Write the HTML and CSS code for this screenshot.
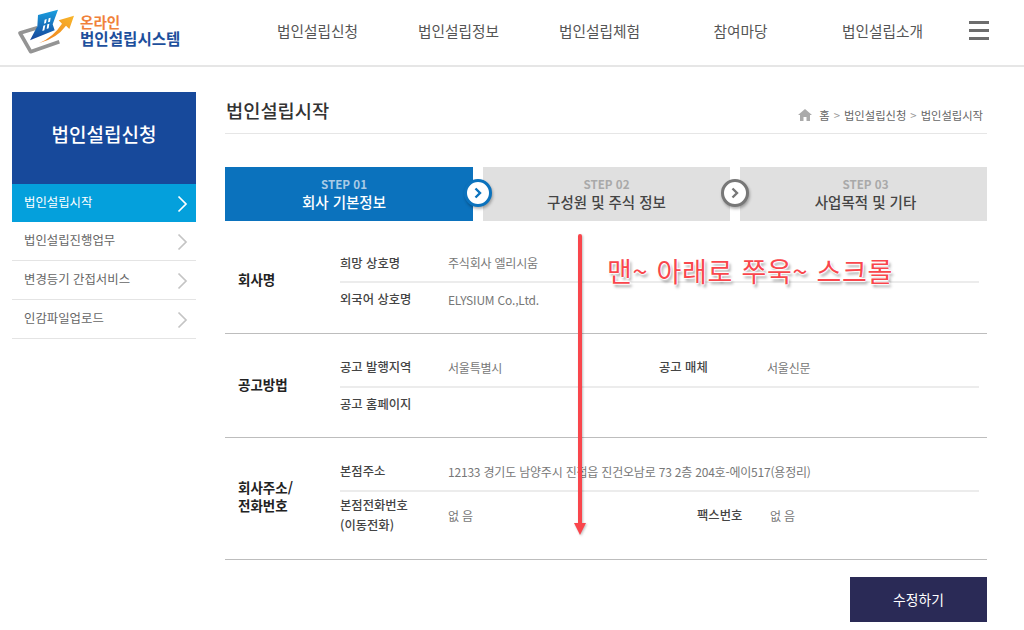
FILE: index.html
```html
<!DOCTYPE html>
<html lang="ko">
<head>
    <meta charset="UTF-8">
    <title>온라인 법인설립시스템</title>
    <link rel="stylesheet" href="styles.css">
</head>
<body>
    <header class="header">
        <div class="logo">
            <svg class="logo-mark" width="70" height="56" viewBox="0 0 210 168">
                <defs>
                    <linearGradient id="logo-blue" x1="0" y1="0" x2="0" y2="1">
                        <stop offset="0" stop-color="#19a0e0"/>
                        <stop offset="1" stop-color="#17459a"/>
                    </linearGradient>
                    <linearGradient id="logo-orange" x1="1" y1="0" x2="0" y2="1">
                        <stop offset="0" stop-color="#f8b62a"/>
                        <stop offset="1" stop-color="#ee7d1f"/>
                    </linearGradient>
                </defs>
                <path d="M82 68 L30 84 L62 140 L148 110" fill="none" stroke="#949494" stroke-width="11" stroke-linejoin="round"/>
                <path d="M88 114 Q130 96 156 56 L146 46 L192 32 L178 72 L168 62 Q140 100 88 114 Z" fill="url(#logo-orange)"/>
                <path d="M84 30 L144 14 L128 58 L134 76 L60 106 L82 64 Z" fill="url(#logo-blue)"/>
                <path d="M104 44 L110 42 L108 54 L102 56 Z M116 40 L122 38 L120 50 L114 52 Z M100 62 L106 60 L103 76 L97 78 Z M112 58 L118 56 L116 70 L110 72 Z" fill="#fff"/>
            </svg>
            <div class="logo-text">
                <span class="logo-sub">온라인</span>
                <span class="logo-main">법인설립시스템</span>
            </div>
        </div>
        <nav class="nav">
            <a>법인설립신청</a>
            <a>법인설립정보</a>
            <a>법인설립체험</a>
            <a>참여마당</a>
            <a>법인설립소개</a>
        </nav>
        <div class="burger"><i></i><i></i><i></i></div>
    </header>

    <div class="wrap">
        <aside class="side">
            <h2 class="side-title">법인설립신청</h2>
            <ul class="side-menu">
                <li class="active"><span>법인설립시작</span><svg width="12" height="18" viewBox="0 0 12 18"><path d="M2.5 1.5 L10 9 L2.5 16.5" fill="none" stroke="#fff" stroke-width="1.7"/></svg></li>
                <li><span>법인설립진행업무</span><svg width="12" height="18" viewBox="0 0 12 18"><path d="M2.5 1.5 L10 9 L2.5 16.5" fill="none" stroke="#c4c4c4" stroke-width="1.7"/></svg></li>
                <li><span>변경등기 간접서비스</span><svg width="12" height="18" viewBox="0 0 12 18"><path d="M2.5 1.5 L10 9 L2.5 16.5" fill="none" stroke="#c4c4c4" stroke-width="1.7"/></svg></li>
                <li><span>인감파일업로드</span><svg width="12" height="18" viewBox="0 0 12 18"><path d="M2.5 1.5 L10 9 L2.5 16.5" fill="none" stroke="#c4c4c4" stroke-width="1.7"/></svg></li>
            </ul>
        </aside>

        <main class="main">
            <div class="page-head">
                <h1>법인설립시작</h1>
                <div class="crumb">
                    <svg width="14" height="12" viewBox="0 0 14 12"><path d="M7 0 L14 6 L12 6 L12 12 L8.5 12 L8.5 8 L5.5 8 L5.5 12 L2 12 L2 6 L0 6 Z" fill="#aaa"/></svg>
                    <span class="home">홈</span>
                    <span class="sep">&gt;</span>
                    <span>법인설립신청</span>
                    <span class="sep">&gt;</span>
                    <span>법인설립시작</span>
                </div>
            </div>

            <div class="steps">
                <div class="step on">
                    <span class="step-no">STEP 01</span>
                    <span class="step-name">회사 기본정보</span>
                    <span class="step-arrow"><svg width="10" height="12" viewBox="0 0 10 12"><path d="M2.5 1.5 L7 6 L2.5 10.5" fill="none" stroke="#0b72bd" stroke-width="2.4"/></svg></span>
                </div>
                <div class="step">
                    <span class="step-no">STEP 02</span>
                    <span class="step-name">구성원 및 주식 정보</span>
                    <span class="step-arrow"><svg width="10" height="12" viewBox="0 0 10 12"><path d="M2.5 1.5 L7 6 L2.5 10.5" fill="none" stroke="#777" stroke-width="2.4"/></svg></span>
                </div>
                <div class="step last">
                    <span class="step-no">STEP 03</span>
                    <span class="step-name">사업목적 및 기타</span>
                </div>
            </div>

            <section class="group group-a">
                <h3>회사명</h3>
                <div class="rows">
                    <div class="row"><b>희망 상호명</b><span>주식회사 엘리시움</span></div>
                    <div class="row"><b>외국어 상호명</b><span>ELYSIUM Co.,Ltd.</span></div>
                </div>
            </section>

            <section class="group group-b">
                <h3>공고방법</h3>
                <div class="rows">
                    <div class="row"><b>공고 발행지역</b><span class="half">서울특별시</span><b class="sub-a">공고 매체</b><span>서울신문</span></div>
                    <div class="row"><b>공고 홈페이지</b></div>
                </div>
            </section>

            <section class="group group-c">
                <h3>회사주소/<br>전화번호</h3>
                <div class="rows">
                    <div class="row"><b>본점주소</b><span>12133 경기도 남양주시 진접읍 진건오남로 73 2층 204호-에이517(용정리)</span></div>
                    <div class="row tall"><b>본점전화번호<br>(이동전화)</b><span class="half-b">없 음</span><b class="sub-b">팩스번호</b><span>없 음</span></div>
                </div>
            </section>

            <div class="actions"><a class="btn-edit">수정하기</a></div>
        </main>
    </div>

    <!-- screenshot annotation -->
    <svg class="note-arrow" width="16" height="304" viewBox="0 0 16 304">
        <path d="M8 2 L8 292" stroke="#f9464c" stroke-width="4" stroke-linecap="round"/>
        <path d="M2 289 L14 289 L8 301 Z" fill="#f9464c"/>
    </svg>
    <div class="note-text">맨~ 아래로 쭈욱~ 스크롤</div>
</body>
</html>
```

FILE: styles.css
```css
* { box-sizing: border-box; }
html, body { margin: 0; height: 630px; overflow: hidden; }
body { position: relative; background: #fff; color: #555; font-family: "Noto Sans CJK KR", "Noto Sans", sans-serif; font-size: 12px; }
h1, h2, h3, ul { margin: 0; padding: 0; list-style: none; }

.header { display: flex; align-items: center; height: 67px; border-bottom: 2px solid #e6e6e6; padding-left: 10px; }
.logo { display: flex; align-items: center; width: 236px; }
.logo-text { display: flex; flex-direction: column; margin-top: -5px; line-height: 17px; }
.logo-sub { color: #f0813a; font-size: 14.6px; font-weight: 700; }
.logo-main { color: #1d4f9c; font-size: 15.6px; font-weight: 700; }
.nav { display: flex; width: 705px; margin-left: 1px; margin-bottom: 4px; }
.nav a { width: 141px; text-align: center; font-size: 14.7px; color: #555; }
.nav a:last-child { padding-left: 2px; }
.burger { display: flex; flex-direction: column; gap: 5px; width: 20px; margin-left: 17px; margin-bottom: 4px; }
.burger i { display: block; height: 3px; background: #6d6d6d; }

.wrap { display: flex; padding: 25px 37px 0 12px; }

.side { width: 184px; margin-right: 29px; }
.side-title { height: 92px; line-height: 84px; background: #17499b; color: #fff; text-align: center; font-size: 19px; font-weight: 500; }
.side-menu li { display: flex; align-items: center; justify-content: space-between; height: 39px; padding: 0 8px 0 12px; border-bottom: 1px solid #e4e4e4; font-size: 12.4px; color: #666; }
.side-menu li span { margin-bottom: 3px; }
.side-menu li svg { margin-top: 2px; }
.side-menu li.active { height: 38px; background: #04a0dc; border-bottom: 0; color: #fff; }

.main { width: 762px; }
.page-head { display: flex; align-items: center; justify-content: space-between; height: 42px; padding: 0 4px 6px 1px; border-bottom: 1px solid #e6e6e6; }
.page-head h1 { font-size: 18.7px; font-weight: 500; color: #333; }
.crumb { display: flex; align-items: center; gap: 4px; margin-top: 11px; font-size: 11.3px; color: #666; }
.crumb .home { margin-left: 3px; }
.crumb .sep { color: #999; }

.steps { display: flex; gap: 10px; margin-top: 33px; }
.step { position: relative; flex: 0 0 247px; height: 54px; padding-top: 9px; background: #e0e0e0; text-align: center; color: #444; }
.step.on { flex: 0 0 248px; padding-right: 10px; background: #0b72bd; color: #fff; }
.step.last { padding-left: 4px; }
.step-no { display: block; font-size: 11.6px; line-height: 16px; font-weight: 700; color: #a9a9a9; }
.step.on .step-no { color: #a9cbe6; }
.step-name { display: block; font-size: 14.5px; line-height: 20px; font-weight: 500; }
.step-arrow { position: absolute; right: -19px; top: 12px; z-index: 1; display: flex; align-items: center; justify-content: center; width: 28px; height: 28px; background: #fff; border: 3px solid #777; border-radius: 50%; box-shadow: 1px 2px 3px rgba(0,0,0,.3); }
.step.on .step-arrow { border-color: #0b72bd; }

.group { display: flex; align-items: center; border-bottom: 1px solid #bdbdbd; padding-left: 13px; padding-right: 8px; }
.group h3 { width: 102px; margin-bottom: 2px; font-size: 13.5px; line-height: 18px; font-weight: 700; color: #222; }
.rows { flex: 1; }
.row { display: flex; align-items: center; height: 37px; padding-bottom: 2px; border-bottom: 2px solid #ececec; }
.row:last-child { height: 33px; padding-bottom: 1px; border-bottom: 0; }
.row b { width: 108px; font-size: 12.3px; line-height: 20px; font-weight: 500; color: #444; }
.row span { font-size: 12px; color: #777; letter-spacing: -.2px; }
.group-a { height: 113px; padding-top: 8px; }
.group-a h3 { margin-bottom: 4px; }
.group-b { height: 104px; }
.group-b h3 { margin-bottom: 4px; }
.group-c { height: 122px; padding-bottom: 3px; }
.row.tall { height: 48px; }
.row .half { width: 211px; }
.row .half-b { width: 249px; }
.row b.sub-a { width: 108px; }
.row b.sub-b { width: 73px; }

.actions { display: flex; justify-content: flex-end; margin-top: 17px; }
.btn-edit { width: 137px; height: 45px; line-height: 45px; background: #2a2a56; color: #fff; text-align: center; font-size: 13.8px; }

.note-arrow { position: absolute; left: 572px; top: 234px; filter: drop-shadow(1px 1px 1px rgba(0,0,0,.25)); }
.note-text { position: absolute; left: 607px; top: 251px; color: #f9464c; font-size: 27px; line-height: 40px; letter-spacing: .7px; white-space: nowrap; text-shadow: 1px 0 1px #fff, -1px 0 1px #fff, 0 -1px 1px #fff, 0 1px 1px #fff, 2px 3px 3px rgba(0,0,0,.4); }
```
